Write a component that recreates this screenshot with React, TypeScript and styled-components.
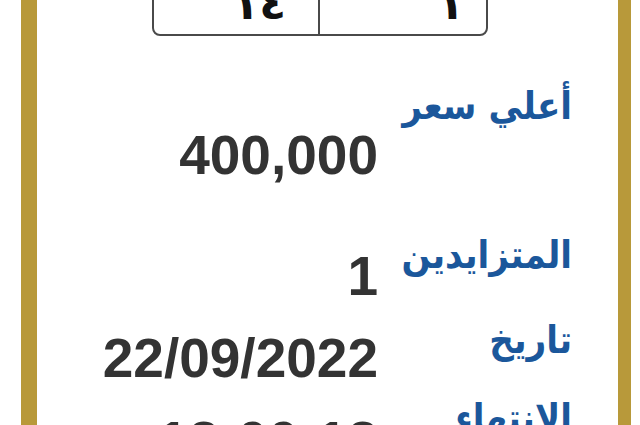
import React from 'react';
import styled, { createGlobalStyle } from 'styled-components';

const GlobalStyle = createGlobalStyle`
  html, body {
    margin: 0;
    padding: 0;
    background: #ffffff;
    overflow: hidden;
  }
  body {
    font-family: "Liberation Sans", Arial, sans-serif;
  }
`;

const Card = styled.div`
  margin-left: 21px;
  width: 581px;
  min-height: 100vh;
  border-left: 16px solid #b8993a;
  border-right: 13px solid #b8993a;
  background: #fff;
`;

const TimerBox = styled.div`
  direction: rtl;
  display: flex;
  width: 336px;
  height: 86px;
  margin: -50px 0 0 115px;
  box-sizing: border-box;
  border: 2px solid #4a4a4a;
  border-radius: 8px;
  overflow: hidden;
`;

const TimerCell = styled.div<{ $pad: number }>`
  flex: none;
  width: 50%;
  box-sizing: border-box;
  padding: 30px ${(p) => p.$pad}px 0 0;
  font-family: "DejaVu Sans", sans-serif;
  font-weight: bold;
  font-size: 44px;
  line-height: 44px;
  color: #111;
  text-align: right;

  & + & {
    border-right: 2px solid #4a4a4a;
  }
`;

const Details = styled.div`
  direction: rtl;
  display: grid;
  grid-template-columns: 182px auto;
  grid-template-rows: 149px 85px auto;
  column-gap: 12px;
  align-items: start;
  margin-top: 31px;
  padding-right: 46px;
`;

const Label = styled.div`
  font-family: "DejaVu Sans Condensed", "DejaVu Sans", sans-serif;
  font-weight: bold;
  font-size: 38px;
  line-height: 78px;
  color: #1b579b;
  text-align: right;
`;

const Value = styled.div<{ $offset: number }>`
  margin-top: ${(p) => p.$offset}px;
  font-family: "Liberation Sans", Arial, sans-serif;
  font-weight: bold;
  font-size: 55px;
  line-height: 80px;
  color: #333333;
  text-align: right;
  direction: ltr;
  justify-self: start;
`;

const ValueLine = styled.div`
  & + & {
    margin-top: 3px;
  }
`;

const details = [
  { label: 'أعلي سعر', values: ['400,000'], offset: 48 },
  { label: 'المتزايدين', values: ['1'], offset: 20 },
  { label: 'تاريخ الانتهاء', values: ['22/09/2022', '12:00:12'], offset: 17 },
];

export default function App() {
  return (
    <>
      <GlobalStyle />
      <Card>
        <TimerBox>
          <TimerCell $pad={22}>١</TimerCell>
          <TimerCell $pad={32}>١٤</TimerCell>
        </TimerBox>
        <Details>
          {details.map((d) => (
            <React.Fragment key={d.label}>
              <Label>{d.label}</Label>
              <Value $offset={d.offset}>
                {d.values.map((v) => (
                  <ValueLine key={v}>{v}</ValueLine>
                ))}
              </Value>
            </React.Fragment>
          ))}
        </Details>
      </Card>
    </>
  );
}
